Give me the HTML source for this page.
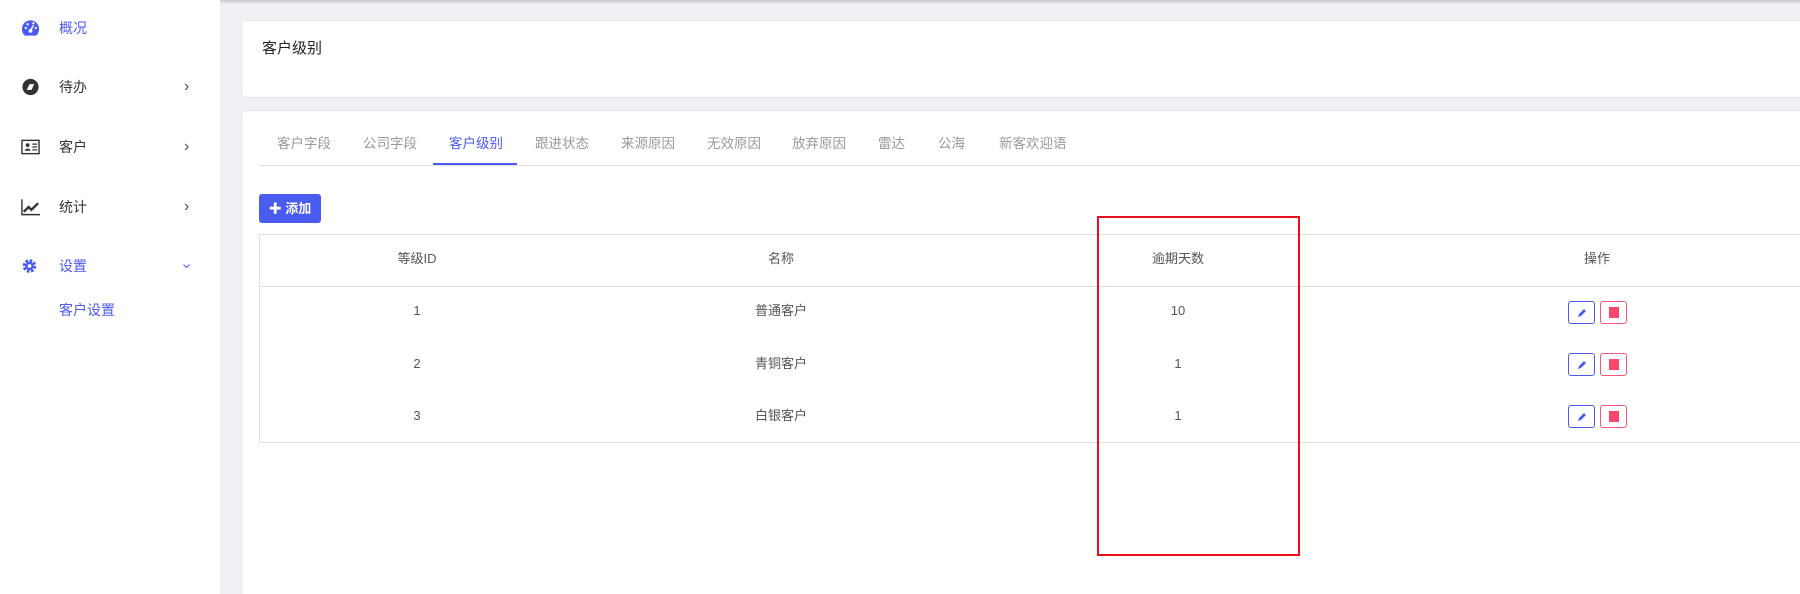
<!DOCTYPE html>
<html style="overflow:hidden;width:1800px;height:594px"><head><meta charset="utf-8"><style>
*{margin:0;padding:0;box-sizing:border-box}
body{width:1800px;height:594px;overflow:hidden;background:#f0f1f5;font-family:"Liberation Sans","Noto Sans CJK SC",sans-serif;position:relative;color:#333}
.top{position:absolute;left:0;top:0;width:1800px;height:4px;background:linear-gradient(#c8c8cc,#f0f1f5)}
.side{position:absolute;left:0;top:0;width:220px;height:594px;background:#fff}
.item{position:absolute;left:0;width:220px;height:20px;font-size:14px;line-height:20px}
.item .ic{position:absolute;left:21px;top:1px;width:19px;height:18px}
.item .t{position:absolute;left:59px;top:0}
.item .ch{position:absolute;left:184px;top:0;color:#555;font-size:16px}
.card{position:absolute;background:#fff;border:1px solid #e3e5ea;border-radius:4px}
.tab{position:absolute;top:134px;font-size:13.5px;color:#999;line-height:20px}
.th,.td{position:absolute;font-size:13px;line-height:20px;transform:translateX(-50%);color:#555}
.hl{position:absolute;left:259px;width:1541px;height:1px;background:#e0e0e4}
.eb{position:absolute;width:27px;height:23px;border:1px solid #4a5cf0;border-radius:3px}
.db{position:absolute;width:27px;height:23px;border:1px solid #f5587a;border-radius:3px}
.db i{position:absolute;left:8px;top:5px;width:10px;height:11px;background:#f7476c}
</style></head><body>
<div class="top"></div>
<div class="side">
 <div class="item" style="top:18px;color:#4b5af0"><svg class="ic" viewBox="0 0 20 18"><path d="M10 1A9 9 0 0 0 1 10c0 3 1 5 3 7h12c2-2 3-4 3-7a9 9 0 0 0-9-9z" fill="#4b5af0"/><circle cx="10" cy="12" r="2" fill="#fff"/><path d="M10 12L13 6" stroke="#fff" stroke-width="1.5"/><circle cx="5" cy="9" r="1.2" fill="#fff"/><circle cx="7" cy="5" r="1.2" fill="#fff"/><circle cx="13" cy="4" r="1.2" fill="#fff"/><circle cx="15.5" cy="9" r="1.2" fill="#fff"/></svg><span class="t">概况</span></div>
 <div class="item" style="top:77px"><svg class="ic" viewBox="0 0 20 18"><circle cx="10" cy="9" r="8.5" fill="#333"/><path d="M6 12l3-6h5l-3 6z" fill="#fff"/></svg><span class="t">待办</span><span class="ch">›</span></div>
 <div class="item" style="top:137px"><svg class="ic" viewBox="0 0 20 18"><rect x="1" y="2" width="18" height="14" fill="none" stroke="#333" stroke-width="1.5"/><circle cx="7" cy="7" r="2" fill="#333"/><path d="M4 13c0-3 6-3 6 0z" fill="#333"/><path d="M12 6h5M12 9h5M12 12h5" stroke="#333" stroke-width="1.3"/></svg><span class="t">客户</span><span class="ch">›</span></div>
 <div class="item" style="top:197px"><svg class="ic" viewBox="0 0 20 18"><path d="M1 1v16h19" fill="none" stroke="#333" stroke-width="1.5"/><path d="M3 14l5-5 3 3 7-7" fill="none" stroke="#333" stroke-width="2.5"/></svg><span class="t">统计</span><span class="ch">›</span></div>
 <div class="item" style="top:256px;color:#4b5af0"><svg class="ic" viewBox="0 0 20 18" style="width:17px"><circle cx="10" cy="9" r="6" fill="none" stroke="#4b5af0" stroke-width="4" stroke-dasharray="3 1.7"/><circle cx="10" cy="9" r="5" fill="#4b5af0"/><circle cx="10" cy="9" r="2.2" fill="#fff"/></svg><span class="t">设置</span><span class="ch" style="color:#4b5af0;transform:rotate(90deg);display:inline-block">›</span></div>
 <div class="item" style="top:300px;color:#4b5af0"><span class="t">客户设置</span></div>
</div>
<div class="card" style="left:241px;top:20px;width:1570px;height:78px"><div style="position:absolute;left:20px;top:16px;font-size:15px;color:#222">客户级别</div></div>
<div class="card" style="left:241px;top:110px;width:1570px;height:490px"></div>
<div style="position:absolute;left:259px;top:165px;width:1541px;height:1px;background:#e0e0e4"></div>
<div style="position:absolute;left:433px;top:163px;width:84px;height:2px;background:#4b5af0"></div>
<span class="tab" style="left:277px">客户字段</span>
<span class="tab" style="left:363px">公司字段</span>
<span class="tab" style="left:449px;color:#4b5af0">客户级别</span>
<span class="tab" style="left:535px">跟进状态</span>
<span class="tab" style="left:621px">来源原因</span>
<span class="tab" style="left:707px">无效原因</span>
<span class="tab" style="left:792px">放弃原因</span>
<span class="tab" style="left:878px">雷达</span>
<span class="tab" style="left:938px">公海</span>
<span class="tab" style="left:999px">新客欢迎语</span>
<div style="position:absolute;left:259px;top:194px;width:62px;height:29px;background:#4a5cf0;border-radius:3px;color:#fff;font-size:13px;line-height:29px;text-align:center;font-weight:bold">✚ 添加</div>
<div style="position:absolute;left:259px;top:234px;width:1560px;height:209px;border:1px solid #e0e0e4"></div>
<div class="hl" style="top:286px"></div>
<span class="th" style="left:417px;top:249px">等级ID</span>
<span class="th" style="left:781px;top:249px">名称</span>
<span class="th" style="left:1178px;top:249px">逾期天数</span>
<span class="th" style="left:1597px;top:249px">操作</span>
<span class="td" style="left:417px;top:301px">1</span><span class="td" style="left:781px;top:301px">普通客户</span><span class="td" style="left:1178px;top:301px">10</span>
<span class="td" style="left:417px;top:354px">2</span><span class="td" style="left:781px;top:354px">青铜客户</span><span class="td" style="left:1178px;top:354px">1</span>
<span class="td" style="left:417px;top:406px">3</span><span class="td" style="left:781px;top:406px">白银客户</span><span class="td" style="left:1178px;top:406px">1</span>
<div class="eb" style="left:1568px;top:301px"><svg viewBox="0 0 10 10" style="position:absolute;left:8px;top:6px;width:10px;height:10px"><path d="M1 9l1-3 5-5 2 2-5 5z" fill="#4a5cf0"/></svg></div><div class="db" style="left:1600px;top:301px"><i></i></div>
<div class="eb" style="left:1568px;top:353px"><svg viewBox="0 0 10 10" style="position:absolute;left:8px;top:6px;width:10px;height:10px"><path d="M1 9l1-3 5-5 2 2-5 5z" fill="#4a5cf0"/></svg></div><div class="db" style="left:1600px;top:353px"><i></i></div>
<div class="eb" style="left:1568px;top:405px"><svg viewBox="0 0 10 10" style="position:absolute;left:8px;top:6px;width:10px;height:10px"><path d="M1 9l1-3 5-5 2 2-5 5z" fill="#4a5cf0"/></svg></div><div class="db" style="left:1600px;top:405px"><i></i></div>
<div style="position:absolute;left:1097px;top:216px;width:203px;height:340px;border:2px solid #e5121e"></div>
</body></html>
